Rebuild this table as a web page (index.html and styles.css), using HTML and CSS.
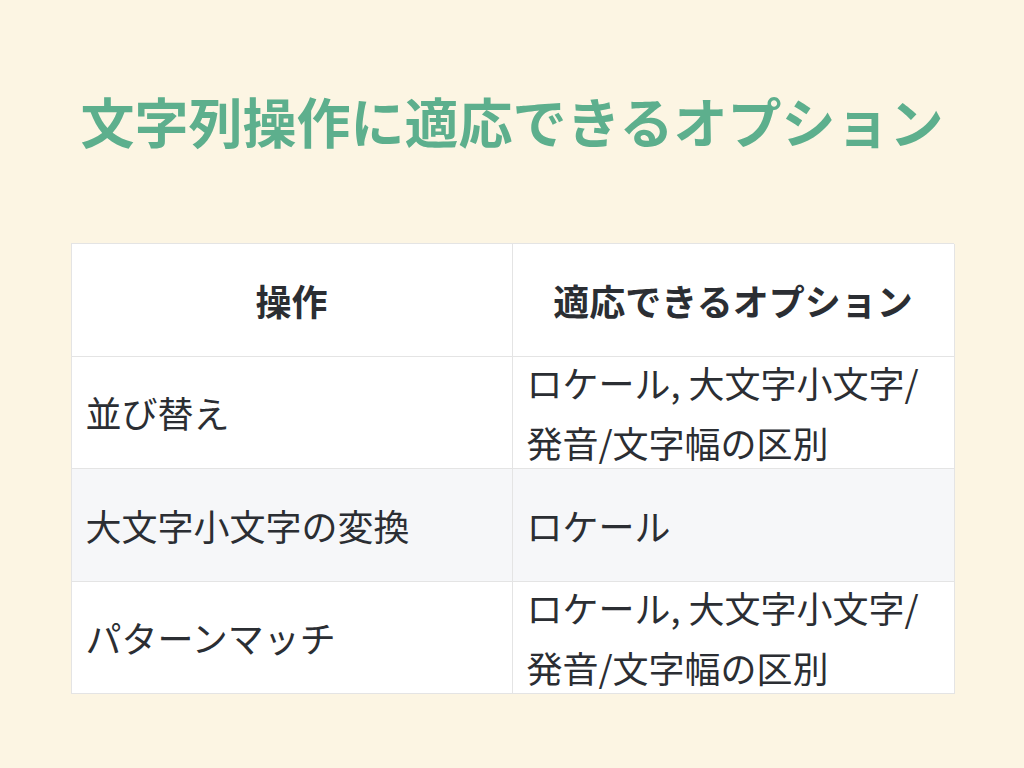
FILE: index.html
```html
<!DOCTYPE html>
<html lang="ja">
<head>
<meta charset="utf-8">
<link rel="stylesheet" href="styles.css">
</head>
<body>
<main class="page">
  <h1 class="title">文字列操作に適応できるオプション</h1>
  <div class="opts" role="table">
    <div class="cell head">操作</div>
    <div class="cell head">適応できるオプション</div>
    <div class="cell">並び替え</div>
    <div class="cell">ロケール, 大文字小文字/発音/文字幅の区別</div>
    <div class="cell alt">大文字小文字の変換</div>
    <div class="cell alt">ロケール</div>
    <div class="cell">パターンマッチ</div>
    <div class="cell">ロケール, 大文字小文字/発音/文字幅の区別</div>
  </div>
</main>
</body>
</html>
```

FILE: styles.css
```css
html, body {
  margin: 0;
  padding: 0;
}
body {
  background: #fcf5e3;
  font-family: "Noto Sans CJK JP", "Noto Sans", sans-serif;
  color: #2b2e33;
}
.page {
  width: 1024px;
  height: 768px;
  display: flex;
  flex-direction: column;
  align-items: center;
  padding-top: 80px;
  box-sizing: border-box;
}
.title {
  margin: 0;
  font-size: 54px;
  line-height: 81px;
  font-weight: 700;
  color: #5daf8d;
}
.opts {
  margin-top: 82px;
  width: 883px;
  display: grid;
  grid-template-columns: 441px 442px;
  grid-template-rows: repeat(4, 112.5px);
  background: #ffffff;
  border-top: 1px solid #e4e4e4;
  border-left: 1px solid #e4e4e4;
  box-sizing: border-box;
}
.cell {
  display: flex;
  align-items: center;
  border-right: 1px solid #e4e4e4;
  border-bottom: 1px solid #e4e4e4;
  padding: 0 14px;
  font-size: 36px;
  line-height: 60px;
  min-height: 0;
  overflow: visible;
  box-sizing: border-box;
}
.cell.head {
  justify-content: center;
  font-weight: 700;
}
.cell.alt {
  background: #f6f7f9;
}
```
